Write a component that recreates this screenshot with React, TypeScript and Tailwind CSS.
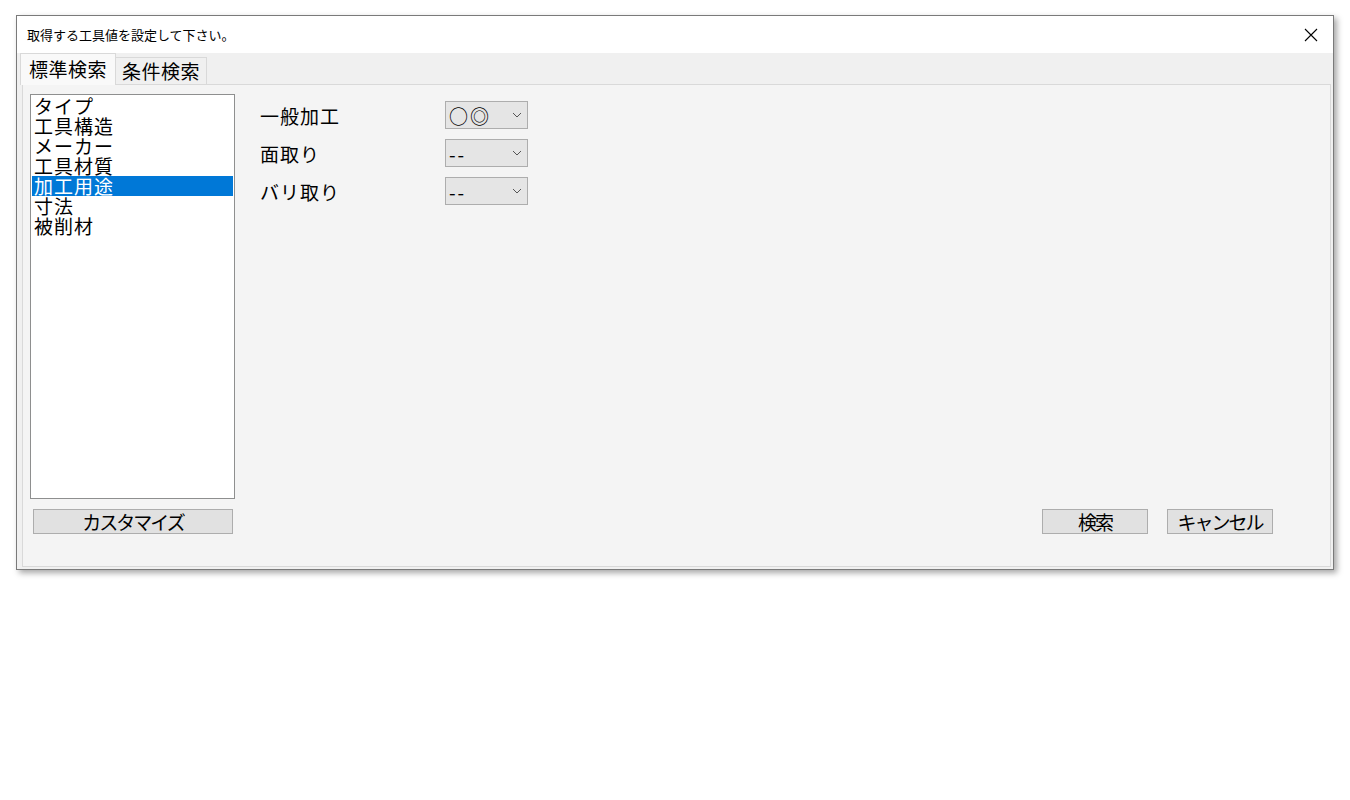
import clsx from "clsx";

const items = ["タイプ", "工具構造", "メーカー", "工具材質", "加工用途", "寸法", "被削材"];
const selected = 4;

const rows = [
  { label: "一般加工", value: "○◎" },
  { label: "面取り", value: "--" },
  { label: "バリ取り", value: "--" },
];

const font = { fontFamily: '"Noto Sans CJK JP", "Noto Sans", sans-serif' };

function Chevron() {
  return (
    <svg width="10" height="6" viewBox="0 0 10 6" className="text-[#555]">
      <path d="M1 1 L5 5 L9 1" fill="none" stroke="currentColor" strokeWidth="1" />
    </svg>
  );
}

function Combo({ value }: { value: string }) {
  return (
    <div className="flex h-[28px] w-[83px] items-center justify-between border border-[#adadad] bg-[#e5e5e5] pl-[3px] pr-[5px]">
      <span className="text-[19px] leading-none tracking-[2px] text-black">{value}</span>
      <Chevron />
    </div>
  );
}

function Button({ label, width }: { label: string; width: string }) {
  return (
    <button
      className={clsx(
        "flex h-[25px] items-center justify-center border border-[#adadad] bg-[#e1e1e1] text-[19px] leading-none tracking-[-2px] text-black",
        width,
      )}
    >
      {label}
    </button>
  );
}

export default function App() {
  return (
    <div className="min-h-[800px] w-[1350px] bg-white pl-[16px] pt-[15px]" style={font}>
      <div className="flex h-[555px] w-[1318px] flex-col border border-[#7a7a7a] bg-[#f0f0f0] shadow-[3px_3px_6px_rgba(0,0,0,0.35)]">
        <div className="flex h-[37px] items-center justify-between bg-white pl-[10px] pr-[15px]">
          <span className="text-[13px] text-black">取得する工具値を設定して下さい。</span>
          <svg width="14" height="14" viewBox="0 0 14 14">
            <path d="M1 1 L13 13 M13 1 L1 13" stroke="#000" strokeWidth="1.1" />
          </svg>
        </div>
        <div className="flex h-[31px] items-end pl-[3px]">
          <div className="relative z-10 -mb-px flex h-[32px] w-[96px] items-center justify-center border-x border-t border-[#d9d9d9] bg-[#f9f9f9] text-[19px] tracking-[0.5px] text-black">
            標準検索
          </div>
          <div className="flex h-[27px] w-[91px] items-center justify-center border-r border-t border-[#d9d9d9] text-[19px] tracking-[0.5px] text-black">
            条件検索
          </div>
        </div>
        <div className="mb-[2px] ml-[5px] mr-[2px] flex flex-1 flex-col border border-[#d9d9d9] bg-[#f4f4f4] pl-[7px] pt-[9px]">
          <div className="flex">
            <div className="h-[405px] w-[205px] border border-[#8e8f8f] bg-white px-px pt-px">
              {items.map((it, i) => (
                <div
                  key={it}
                  className={clsx(
                    "h-[20px] pl-[2px] text-[19px] leading-[20px] tracking-[1px] whitespace-nowrap",
                    i === selected ? "bg-[#0078d7] text-white" : "text-black",
                  )}
                >
                  {it}
                </div>
              ))}
            </div>
            <div className="ml-[25px] mt-[7px] flex flex-col gap-[10px]">
              {rows.map((r) => (
                <div key={r.label} className="flex items-center">
                  <span className="w-[185px] text-[19px] leading-none tracking-[1px] text-black">{r.label}</span>
                  <Combo value={r.value} />
                </div>
              ))}
            </div>
          </div>
          <div className="mt-[10px] flex items-center justify-between pr-[57px]">
            <div className="pl-[3px]">
              <Button label="カスタマイズ" width="w-[200px]" />
            </div>
            <div className="flex gap-[19px]">
              <Button label="検索" width="w-[106px]" />
              <Button label="キャンセル" width="w-[106px]" />
            </div>
          </div>
        </div>
      </div>
    </div>
  );
}
